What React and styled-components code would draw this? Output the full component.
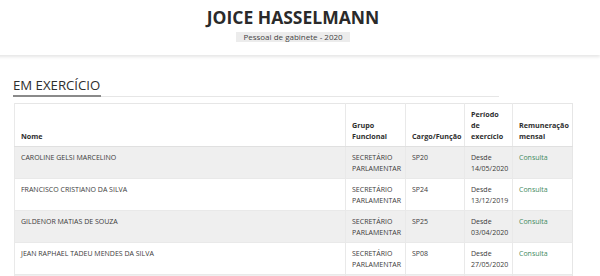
import React from 'react';
import styled, { createGlobalStyle } from 'styled-components';

const servidores = [
  { nome: 'CAROLINE GELSI MARCELINO', cargo: 'SP20', desde: '14/05/2020' },
  { nome: 'FRANCISCO CRISTIANO DA SILVA', cargo: 'SP24', desde: '13/12/2019' },
  { nome: 'GILDENOR MATIAS DE SOUZA', cargo: 'SP25', desde: '03/04/2020' },
  { nome: 'JEAN RAPHAEL TADEU MENDES DA SILVA', cargo: 'SP08', desde: '27/05/2020' },
  { nome: 'JOÃO PAULO DE OLIVEIRA', cargo: 'SP15', desde: '02/03/2020' },
];

const columns = [
  { label: ['Nome'], width: 331 },
  { label: ['Grupo', 'Funcional'], width: 60 },
  { label: ['Cargo/Função'], width: 59 },
  { label: ['Período', 'de', 'exercício'], width: 48 },
  { label: ['Remuneração', 'mensal'], width: 60 },
];

const Lines = ({ lines }) =>
  lines.map((l, i) => (
    <React.Fragment key={i}>
      {i > 0 && <br />}
      {l}
    </React.Fragment>
  ));

const App = () => (
  <>
    <GlobalStyle />
    <Header>
      <Title>JOICE HASSELMANN</Title>
      <Subtitle>Pessoal de gabinete - 2020</Subtitle>
    </Header>
    <Content>
      <SectionHead>
        <SectionTitle>EM EXERCÍCIO</SectionTitle>
      </SectionHead>
      <Table>
        <colgroup>
          {columns.map((c, i) => (
            <col key={i} style={{ width: c.width }} />
          ))}
        </colgroup>
        <thead>
          <tr>
            {columns.map((c, i) => (
              <Th key={i}>
                <Lines lines={c.label} />
              </Th>
            ))}
          </tr>
        </thead>
        <tbody>
          {servidores.map((s, i) => (
            <Row key={s.nome} striped={i % 2 === 0}>
              <Td>{s.nome}</Td>
              <Td>
                <Lines lines={['SECRETÁRIO', 'PARLAMENTAR']} />
              </Td>
              <Td>{s.cargo}</Td>
              <Td>
                <Lines lines={['Desde', s.desde]} />
              </Td>
              <Td>
                <Link>Consulta</Link>
              </Td>
            </Row>
          ))}
        </tbody>
      </Table>
    </Content>
  </>
);

const GlobalStyle = createGlobalStyle`
  body {
    margin: 0;
    background: #fff;
    font-family: "Open Sans", "Noto Sans", sans-serif;
    color: #333;
    overflow: hidden;
  }
`;

const Header = styled.header`
  height: 55px;
  display: flex;
  flex-direction: column;
  align-items: center;
  padding-top: 7px;
  box-sizing: border-box;
  box-shadow: 0 2px 3px rgba(0, 0, 0, 0.1);
  margin-left: -14px;
`;

const Title = styled.h1`
  margin: 0;
  font-size: 17.5px;
  line-height: 20px;
  font-weight: 700;
  color: #2a2a2a;
`;

const Subtitle = styled.div`
  margin-top: 5px;
  padding: 0 7px;
  background: #ececec;
  font-size: 8px;
  line-height: 10px;
  color: #444;
`;

const Content = styled.main`
  padding: 18px 28px 0 13px;
`;

const SectionHead = styled.div`
  width: 486px;
  border-bottom: 1px solid #e6e6e6;
`;

const SectionTitle = styled.h2`
  display: inline-block;
  margin: 0 0 -1px;
  padding: 0 1px 2px 0;
  font-size: 13.2px;
  line-height: 16px;
  font-weight: 400;
  color: #2e2e2e;
  border-bottom: 2px solid #8a8a8a;
`;

const Table = styled.table`
  margin: 6px 0 0 1px;
  width: 558px;
  table-layout: fixed;
  border-collapse: collapse;
  border: 1px solid #e6e6e6;
  font-size: 7px;
  line-height: 11px;
`;

const Th = styled.th`
  height: 42px;
  box-sizing: border-box;
  padding: 5px 5px 4px 6px;
  text-align: left;
  vertical-align: bottom;
  font-weight: 700;
  font-size: 7.2px;
  white-space: nowrap;
  border-left: 1px solid #e9e9e9;
  border-bottom: 1px solid #e0e0e0;
  color: #2e2e2e;
`;

const Row = styled.tr`
  background: ${(p) => (p.striped ? '#efefef' : '#fff')};
`;

const Td = styled.td`
  height: 31px;
  box-sizing: border-box;
  padding: 5px 5px 4px 6px;
  vertical-align: top;
  white-space: nowrap;
  border-left: 1px solid #e9e9e9;
  border-top: 1px solid #e9e9e9;
  color: #3a3a3a;
`;

const Link = styled.a`
  color: #3f8a61;
  text-decoration: none;
`;

export default App;
